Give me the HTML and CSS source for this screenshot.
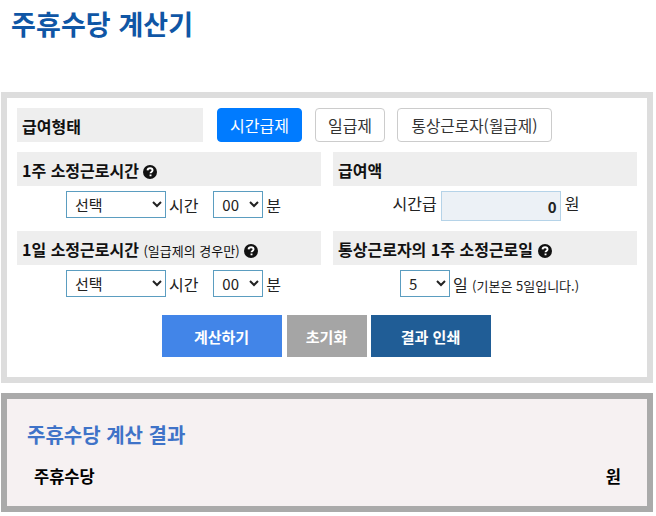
FILE: index.html
```html
<!DOCTYPE html>
<html lang="ko">
<head>
    <meta charset="UTF-8">
    <meta name="viewport" content="width=device-width, initial-scale=1.0">
    <title>주휴수당 계산기</title>
    <link rel="stylesheet" href="styles.css">
</head>
<body>
    <h1 class="page-title">주휴수당 계산기</h1>

    <div class="calc-box">
        <div class="pay-type">
            <div class="label-bar pay-label">급여형태</div>
            <button class="type-btn active">시간급제</button>
            <button class="type-btn">일급제</button>
            <button class="type-btn">통상근로자(월급제)</button>
        </div>

        <div class="calc-grid">
            <div class="field">
                <div class="label-bar">1주 소정근로시간
                    <svg class="help" viewBox="0 0 16 16"><circle cx="8" cy="8" r="8"/><path class="mark" d="M5.2 6.2c.1-1.5 1.3-2.4 2.9-2.4s2.8.9 2.8 2.2c0 2-2.3 1.9-2.3 3.5M8.6 10.9v2"/></svg>
                </div>
                <div class="field-row">
                    <select class="sel-hour"><option>선택</option></select>
                    <span>시간</span>
                    <select class="sel-min"><option>00</option></select>
                    <span>분</span>
                </div>
            </div>
            <div class="field">
                <div class="label-bar">급여액</div>
                <div class="field-row wage-row">
                    <span>시간급</span>
                    <input class="wage-input" type="text" value="0">
                    <span>원</span>
                </div>
            </div>
            <div class="field">
                <div class="label-bar">1일 소정근로시간 <small>(일급제의 경우만)</small>
                    <svg class="help" viewBox="0 0 16 16"><circle cx="8" cy="8" r="8"/><path class="mark" d="M5.2 6.2c.1-1.5 1.3-2.4 2.9-2.4s2.8.9 2.8 2.2c0 2-2.3 1.9-2.3 3.5M8.6 10.9v2"/></svg>
                </div>
                <div class="field-row">
                    <select class="sel-hour"><option>선택</option></select>
                    <span>시간</span>
                    <select class="sel-min"><option>00</option></select>
                    <span>분</span>
                </div>
            </div>
            <div class="field">
                <div class="label-bar">통상근로자의 1주 소정근로일
                    <svg class="help" viewBox="0 0 16 16"><circle cx="8" cy="8" r="8"/><path class="mark" d="M5.2 6.2c.1-1.5 1.3-2.4 2.9-2.4s2.8.9 2.8 2.2c0 2-2.3 1.9-2.3 3.5M8.6 10.9v2"/></svg>
                </div>
                <div class="field-row">
                    <select class="sel-min"><option>5</option></select>
                    <span>일 <small>(기본은 5일입니다.)</small></span>
                </div>
            </div>
        </div>

        <div class="actions">
            <button class="act-btn calc">계산하기</button>
            <button class="act-btn reset">초기화</button>
            <button class="act-btn print">결과 인쇄</button>
        </div>
    </div>

    <div class="result-box">
        <h2>주휴수당 계산 결과</h2>
        <div class="result-row">
            <span>주휴수당</span>
            <span>원</span>
        </div>
    </div>
</body>
</html>
```

FILE: styles.css
```css
body {
    font-family: 'Noto Sans CJK KR', 'Noto Sans', sans-serif;
    margin: 0;
    width: 656px;
    height: 516px;
    overflow: hidden;
    background-color: #FFFFFF;
    color: #222;
    font-size: 16px;
}
.page-title {
    margin: 0;
    height: 92px;
    padding: 6px 0 0 11px;
    box-sizing: border-box;
    font-size: 27px;
    line-height: 36px;
    font-weight: 700;
    color: #0f56a5;
    letter-spacing: 0.1px;
}
.calc-box {
    margin-left: 1px;
    width: 652px;
    height: 291px;
    box-sizing: border-box;
    border: 6px solid #ddd;
    padding: 10px 10px 0 10px;
}
.pay-type {
    display: flex;
    height: 34px;
}
.label-bar {
    background-color: #eee;
    height: 34px;
    line-height: 37px;
    padding-left: 5px;
    box-sizing: border-box;
    font-weight: 700;
    font-size: 16px;
    color: #111;
    white-space: nowrap;
}
.label-bar small {
    font-weight: 400;
    font-size: 13px;
}
.pay-label {
    width: 186px;
    margin-right: 14px;
}
.type-btn {
    font-family: inherit;
    font-size: 16px;
    height: 34px;
    padding: 0;
    margin-right: 13px;
    width: 70px;
    background: #fff;
    border: 1px solid #ccc;
    border-radius: 4px;
    color: #333;
}
.type-btn.active {
    width: 85px;
    background-color: #007bff;
    border-color: #007bff;
    color: #fff;
}
.type-btn:last-child {
    width: 155px;
    margin-left: -1px;
    font-size: 15.7px;
}
.calc-grid {
    display: grid;
    grid-template-columns: 304px 304px;
    column-gap: 12px;
    margin-top: 10px;
}
.field {
    height: 79px;
}
.field-row {
    display: flex;
    justify-content: center;
    align-items: center;
    gap: 3px;
    margin-top: 5px;
    padding-left: 9px;
    height: 27px;
}
.field-row small {
    font-size: 13px;
}
select {
    font-family: inherit;
    font-size: 15px;
    height: 27px;
    padding: 0 0 0 4px;
    background: #fff;
    border: 1px solid #5b9dc0;
    border-radius: 0;
    color: #222;
}
.sel-hour {
    width: 100px;
}
.sel-min {
    width: 50px;
}
.sel-hour + span {
    margin-right: 12px;
}
.wage-row {
    gap: 4px;
    height: 30px;
    padding-left: 2px;
    align-items: flex-start;
}
.wage-row span {
    line-height: 24px;
}
.wage-input {
    width: 120px;
    height: 30px;
    box-sizing: border-box;
    border: 1px solid #b5d3e8;
    background-color: #ecf1f6;
    text-align: right;
    font-family: inherit;
    font-size: 15px;
    font-weight: 700;
    padding: 0 3px;
    color: #222;
}
.help {
    width: 14px;
    height: 14px;
    vertical-align: -2px;
}
.help circle {
    fill: #111;
}
.help .mark {
    fill: none;
    stroke: #fff;
    stroke-width: 2.2;
}
.actions {
    display: flex;
    justify-content: center;
    gap: 5px;
    margin: 5px 0 0 -2px;
}
.act-btn {
    font-family: inherit;
    font-size: 15px;
    font-weight: 700;
    height: 42px;
    border: none;
    color: #fff;
    padding: 0;
}
.calc {
    width: 120px;
    background-color: #4285e8;
}
.reset {
    width: 80px;
    background-color: #a5a5a5;
}
.print {
    width: 120px;
    margin-left: -1px;
    background-color: #205d96;
}
.result-box {
    margin: 10px 0 0 1px;
    width: 652px;
    height: 119px;
    box-sizing: border-box;
    border: 6px solid #aaa;
    background-color: #f6f1f2;
    padding: 22px 26px 0 20px;
}
.result-box h2 {
    margin: 0;
    font-size: 20px;
    line-height: 28px;
    font-weight: 700;
    color: #3f73c8;
}
.result-row {
    display: flex;
    justify-content: space-between;
    margin-top: 16px;
    padding: 0 0 0 7px;
    font-size: 16.5px;
    line-height: 22px;
    font-weight: 700;
    color: #000;
}
```
